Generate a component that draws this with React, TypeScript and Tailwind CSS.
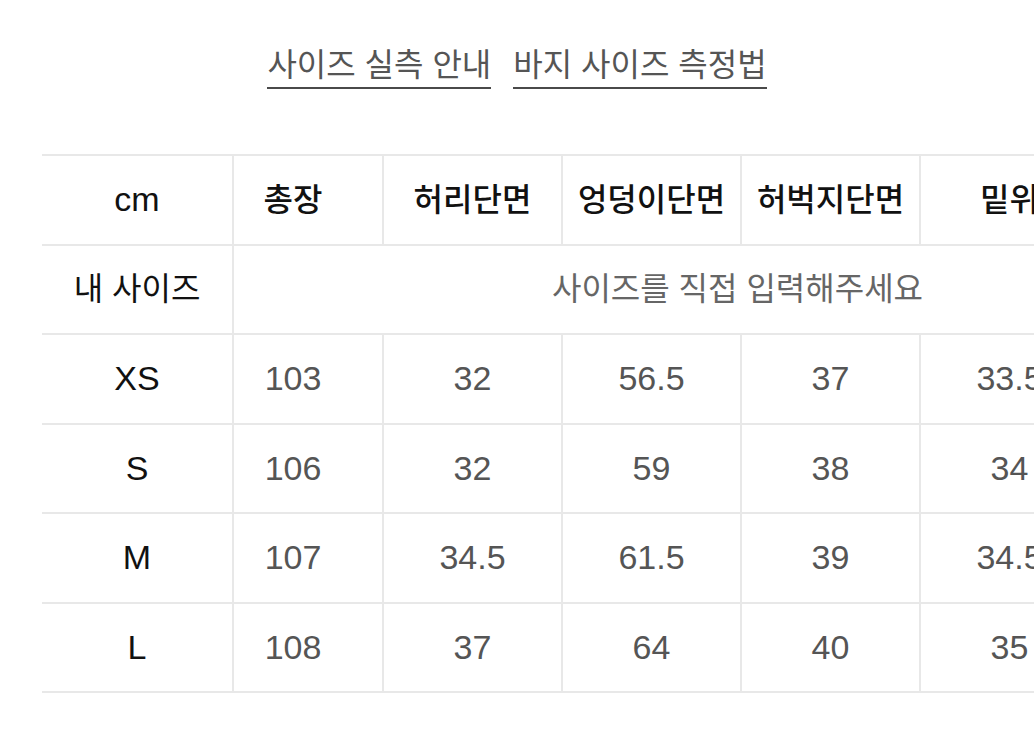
const headers = ['총장', '허리단면', '엉덩이단면', '허벅지단면', '밑위', '밑단단면']

const rows: { size: string; values: string[] }[] = [
  { size: 'XS', values: ['103', '32', '56.5', '37', '33.5', '19'] },
  { size: 'S', values: ['106', '32', '59', '38', '34', '19.5'] },
  { size: 'M', values: ['107', '34.5', '61.5', '39', '34.5', '20'] },
  { size: 'L', values: ['108', '37', '64', '40', '35', '20.5'] },
]

const colWidths = ['w-[150px]', 'w-[179px]', 'w-[179px]', 'w-[179px]', 'w-[179px]', 'w-[143px]']

// the first measurement column sits a little left of its cell centre
const padFor = (i: number) => (i === 0 ? 'pr-[30px]' : '')

export default function App() {
  return (
    <div
      className="h-[750px] w-[1034px] overflow-hidden bg-white"
      style={{ fontFamily: '"Liberation Sans", "Noto Sans CJK KR", sans-serif' }}
    >
      <div className="flex justify-center gap-[22px] pt-[44px]">
        <span className="border-b-2 border-[#4a4a4a] pb-[1px] text-[32px] leading-[42px] text-[#555]">사이즈 실측 안내</span>
        <span className="border-b-2 border-[#4a4a4a] pb-[1px] text-[32px] leading-[42px] text-[#555]">바지 사이즈 측정법</span>
      </div>

      <div className="ml-[42px] mt-[65px]">
        <table className="w-[1200px] table-fixed border-collapse">
          <colgroup>
            <col className="w-[191px]" />
            {colWidths.map((w, i) => (
              <col key={i} className={w} />
            ))}
          </colgroup>
          <tbody>
            <tr className="h-[89.5px]">
              <td className="border-y-2 border-[#e8e8e8] text-center text-[34px] text-[#111]">cm</td>
              {headers.map((h, i) => (
                <td
                  key={h}
                  className={`border-2 border-[#e8e8e8] text-center text-[32px] font-medium whitespace-nowrap text-[#111] ${padFor(i)}`}
                >
                  {h}
                </td>
              ))}
            </tr>
            <tr className="h-[89.5px]">
              <td className="border-y-2 border-[#e8e8e8] text-center text-[32px] text-[#111]">내 사이즈</td>
              <td colSpan={6} className="border-2 border-[#e8e8e8] text-center text-[32px] text-[#666]">
                사이즈를 직접 입력해주세요
              </td>
            </tr>
            {rows.map((r) => (
              <tr key={r.size} className="h-[89.5px]">
                <td className="border-y-2 border-[#e8e8e8] text-center text-[34px] text-[#111]">{r.size}</td>
                {r.values.map((v, i) => (
                  <td key={i} className={`border-2 border-[#e8e8e8] text-center text-[34px] text-[#555] ${padFor(i)}`}>
                    {v}
                  </td>
                ))}
              </tr>
            ))}
          </tbody>
        </table>
      </div>
    </div>
  )
}
